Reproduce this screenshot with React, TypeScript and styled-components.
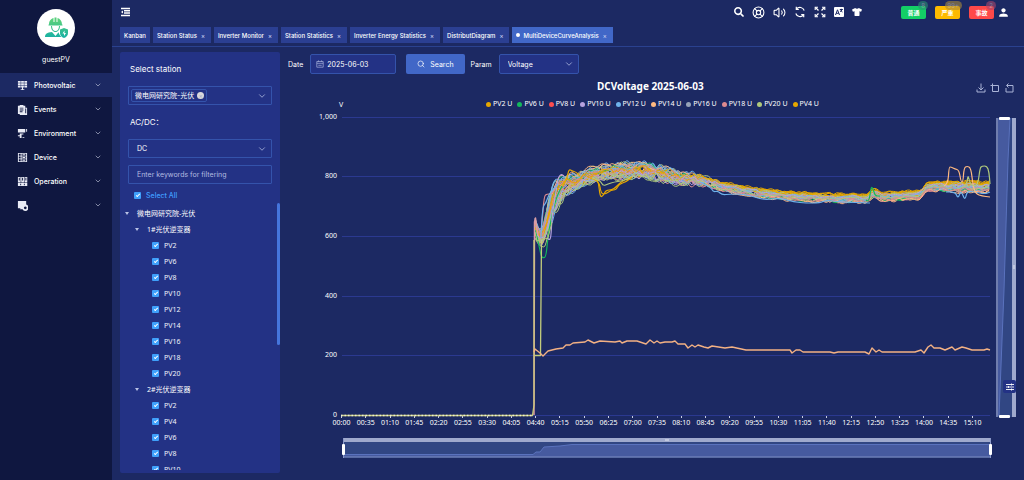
import React, { useState } from 'react';
import styled, { createGlobalStyle } from 'styled-components';
import { ChevronDown, LifeBuoy, Search, Volume2 } from 'lucide-react';
import { FaSearch, FaTshirt } from 'react-icons/fa';
import { MdPerson } from 'react-icons/md';

const UI = `Inter, "Noto Sans CJK SC", sans-serif`;
const TEXT = `"Noto Sans", "Noto Sans CJK SC", sans-serif`;

const GlobalStyle = createGlobalStyle`
  *, *::before, *::after { box-sizing: border-box; }
  body { margin: 0; background: #1c2963; color: #fff; font: 7px ${UI}; }
  button, input, select { font: inherit; color: inherit; margin: 0; }
  ul { list-style: none; margin: 0; padding: 0; }
  svg { display: block; flex: none; }
`;

const Page = styled.div`
  display: flex;
  height: 100vh;
  min-height: 480px;
  overflow: hidden;
`;

/* ---------- side navigation ---------- */

const Side = styled.nav`
  flex: none;
  width: 112px;
  background: #0f1740;
`;

const Profile = styled.div`
  display: flex;
  flex-direction: column;
  align-items: center;
  gap: 8px;
  height: 73px;
  padding-top: 9px;
  line-height: 10px;
`;

const Avatar = styled.div`
  display: grid;
  place-items: center;
  width: 38px;
  height: 38px;
  border-radius: 50%;
  background: #fff;
`;

const MenuItem = styled.button<{ $active?: boolean }>`
  display: flex;
  align-items: center;
  width: 100%;
  height: 24px;
  padding: 0 10px 0 17px;
  border: 0;
  background: ${(p) => (p.$active ? '#1c2963' : 'transparent')};
  font-weight: 500;
  text-align: left;
  cursor: pointer;
`;

const MenuLabel = styled.span`
  flex: 1;
  margin-left: 6px;
`;

/* ---------- top bar ---------- */

const Main = styled.div`
  display: flex;
  flex: 1;
  flex-direction: column;
  min-width: 0;
`;

const TopBar = styled.header`
  display: flex;
  align-items: center;
  height: 24px;
  padding: 0 14px 0 8px;
`;

const IconButton = styled.button`
  display: grid;
  place-items: center;
  padding: 0;
  border: 0;
  background: none;
  color: #fff;
  cursor: pointer;
`;

const TopIcons = styled.div`
  display: flex;
  align-items: center;
  gap: 8px;
  margin-left: auto;
`;

const Alarms = styled.div`
  display: flex;
  gap: 9px;
  margin: 0 3px 0 39px;
`;

const Alarm = styled.button<{ $color: string }>`
  position: relative;
  width: 25px;
  height: 13px;
  padding: 0;
  border: 0;
  border-radius: 2px;
  background: ${(p) => p.$color};
  font-size: 6px;
  font-weight: 700;
  line-height: 13px;
  cursor: pointer;
`;

const Count = styled.span<{ $color: string }>`
  position: absolute;
  top: -5px;
  right: -2px;
  min-width: 10px;
  height: 9px;
  padding: 0 3px;
  border-radius: 5px;
  background: ${(p) => p.$color};
  color: #b4b8c8;
  font-weight: 400;
  line-height: 9px;
  opacity: 0.6;
`;

const Tabs = styled.div`
  display: flex;
  gap: 3px;
  height: 23px;
  padding: 3px 8px 4px;
  border-bottom: 1px solid #2a418f;
`;

const Tab = styled.button<{ $active?: boolean }>`
  display: flex;
  align-items: center;
  gap: 4px;
  height: 16px;
  padding: 0 4px;
  border: 0;
  background: ${(p) => (p.$active ? '#4167c7' : '#2b3f92')};
  font-size: 6px;
  font-weight: 500;
  white-space: nowrap;
  cursor: pointer;
`;

const TabDot = styled.span`
  width: 4px;
  height: 4px;
  margin-right: -1px;
  border-radius: 50%;
  background: #fff;
`;

const TabClose = styled.span`
  width: 4px;
  margin-right: 2px;
  color: #c5cdf0;
  text-align: center;
`;

/* ---------- station panel ---------- */

const Content = styled.main`
  display: flex;
  flex: 1;
  gap: 8px;
  min-height: 0;
  padding: 5px 0 7px 8px;
`;

const Panel = styled.section`
  display: flex;
  flex: none;
  flex-direction: column;
  width: 160px;
  padding: 12px 0 3px;
  border-radius: 2px;
  background: #233285;
`;

const PanelTitle = styled.h2`
  margin: 0 10px;
  font-size: 8px;
  font-weight: 400;
  line-height: 10px;
`;

const FieldTitle = styled.label`
  margin: 12px 10px 0;
  font-size: 8px;
  line-height: 10px;
`;

const Field = styled.div<{ $top: number }>`
  position: relative;
  display: flex;
  align-items: center;
  height: 19px;
  margin: ${(p) => p.$top}px 8px 0;
  border: 1px solid #3453ab;
  border-radius: 1px;
  color: #aab4dc;
`;

const FieldSelect = styled.select`
  flex: 1;
  width: 100%;
  height: 100%;
  padding: 0 8px;
  border: 0;
  outline: 0;
  appearance: none;
  background: transparent;
  color: #fff;
`;

const FieldInput = styled.input`
  flex: 1;
  width: 100%;
  height: 100%;
  padding: 0 8px;
  border: 0;
  outline: 0;
  background: transparent;
  color: #fff;
  &::placeholder { color: #b3bce0; opacity: 1; }
`;

const Chevron = styled(ChevronDown)`
  position: absolute;
  right: 4px;
  pointer-events: none;
`;

const Tag = styled.span`
  display: flex;
  align-items: center;
  gap: 3px;
  height: 13px;
  margin-left: 2px;
  padding: 0 2px 0 3px;
  border: 1px solid #3453ab;
  border-radius: 2px;
  color: #fff;
  line-height: 11px;
  white-space: nowrap;
`;

const TagClose = styled.button`
  width: 7px;
  height: 7px;
  padding: 0;
  border: 0;
  border-radius: 50%;
  background: #d8d8dc;
  color: #a3a8bd;
  font-size: 6px;
  line-height: 7px;
`;

const CheckRow = styled.label<{ $indent: number }>`
  display: flex;
  align-items: center;
  gap: 5px;
  height: 16px;
  padding-left: ${(p) => p.$indent}px;
  color: #f0f2fb;
  cursor: pointer;
`;

const SelectAll = styled(CheckRow)`
  margin-top: 3px;
  color: #409eff;
  font-weight: 500;
`;

const Check = styled.input`
  display: grid;
  place-items: center;
  width: 7px;
  height: 7px;
  appearance: none;
  border-radius: 1px;
  background: #3fa0fb;
  &:checked::after {
    content: '';
    width: 2px;
    height: 4px;
    margin-top: -1px;
    border: solid #fff;
    border-width: 0 1px 1px 0;
    transform: rotate(45deg);
  }
`;

const TreeArea = styled.div`
  position: relative;
  flex: 1;
  min-height: 0;
`;

const Tree = styled.div`
  height: 100%;
  padding-top: 2px;
  overflow: hidden;
  font-family: ${TEXT};
`;

const Node = styled.button<{ $indent: number }>`
  display: flex;
  align-items: center;
  gap: 8px;
  width: 100%;
  height: 16px;
  padding: 0 0 0 ${(p) => p.$indent}px;
  border: 0;
  background: none;
  font-size: 7px;
  &::before {
    content: '';
    border: solid transparent;
    border-width: 3px 2px 0;
    border-top-color: #b9c2e6;
  }
`;

const Thumb = styled.div`
  position: absolute;
  top: 0;
  right: 0;
  width: 3px;
  height: 53%;
  border-radius: 2px;
  background: #4575dd;
`;

/* ---------- chart side ---------- */

const Work = styled.section`
  display: flex;
  flex: 1;
  flex-direction: column;
  min-width: 0;
`;

const Query = styled.form`
  display: flex;
  align-items: center;
  height: 20px;
  margin-top: 2px;
`;

const QueryBox = styled.div<{ $width: number }>`
  position: relative;
  display: flex;
  align-items: center;
  width: ${(p) => p.$width}px;
  height: 20px;
  margin: 0 10px 0 7px;
  border: 1px solid #3453ab;
  border-radius: 2px;
  background: #233285;
  color: #aab4dc;
`;

const DateInput = styled(FieldInput)`
  padding: 0 3px;
`;

const SearchButton = styled.button`
  display: flex;
  align-items: center;
  gap: 5px;
  height: 20px;
  margin-right: 6px;
  padding: 0 11px;
  border: 0;
  border-radius: 2px;
  background: #4167c7;
  cursor: pointer;
`;

const ChartHead = styled.div`
  display: flex;
  align-items: center;
  height: 20px;
  margin-top: 2px;
  padding: 0 10px 0 309px;
  font-family: ${TEXT};
`;

const ChartTitle = styled.h1`
  flex: 1;
  margin: 0;
  font-size: 10px;
  font-weight: 700;
  line-height: 14px;
`;

const Tools = styled.div`
  display: flex;
  gap: 4px;
  padding-top: 4px;
`;

const Legend = styled.ul`
  display: flex;
  gap: 5px;
  height: 12px;
  margin-top: 2px;
  padding-left: 198px;
  font-family: ${TEXT};
`;

const LegendItem = styled.li<{ $color: string }>`
  display: flex;
  align-items: center;
  gap: 2px;
  white-space: nowrap;
  line-height: 12px;
  &::before {
    content: '';
    width: 5px;
    height: 5px;
    border-radius: 50%;
    background: ${(p) => p.$color};
  }
`;

const ChartBox = styled.div`
  position: relative;
`;

const ChartSvg = styled.svg`
  width: 100%;
  height: auto;
  margin-top: -12px;
  font-family: ${TEXT};
  font-size: 7px;
  pointer-events: none;
`;

const Floating = styled.button`
  position: absolute;
  right: 8px;
  bottom: 71px;
  display: grid;
  place-items: center;
  width: 13px;
  height: 13px;
  padding: 0;
  border: 0;
  border-radius: 2px;
  background: #233285;
  color: #fff;
`;

/* ---------- data ---------- */

type Pt = [number, number];

const GOLD = '#e6a700';
const LEGEND: [string, string][] = [
  ['PV2 U', GOLD],
  ['PV6 U', '#13b85c'],
  ['PV8 U', '#ff4d4f'],
  ['PV10 U', '#b6a2de'],
  ['PV12 U', '#6fb3ec'],
  ['PV14 U', '#ffb980'],
  ['PV16 U', '#97a3b8'],
  ['PV18 U', '#dc8a8f'],
  ['PV20 U', '#b0c97c'],
  ['PV4 U', GOLD],
];

/* centre line and half spread of the bundle: x, y, spread */
const BAND: [number, number, number][] = [
  [535, 228, 9], [537, 232, 9], [541, 241, 8], [545, 228, 16], [549, 212, 19], [554, 199, 18],
  [560, 190, 14], [566, 185, 12], [575, 182, 10], [586, 177, 8], [600, 173, 8],
  [620, 171, 9], [642, 170, 9], [660, 173, 9], [680, 178, 9], [692, 178, 9],
  [705, 181, 7], [720, 186, 6], [735, 189, 6], [752, 192, 5], [790, 196, 5],
  [830, 198, 5], [868, 199, 5], [873, 192, 5], [881, 197, 5], [920, 195, 5],
  [927, 187, 5], [945, 186, 6], [965, 187, 6], [990, 187, 6],
];

const bandAt = (x: number): Pt => {
  let i = 0;
  while (i < BAND.length - 2 && BAND[i + 1][0] < x) i += 1;
  const a = BAND[i];
  const b = BAND[i + 1];
  const t = Math.min(1, Math.max(0, (x - a[0]) / (b[0] - a[0])));
  return [a[1] + (b[1] - a[1]) * t, a[2] + (b[2] - a[2]) * t];
};

const random = (seed: number) => {
  let s = seed;
  return () => {
    s = (s * 1664525 + 1013904223) % 4294967296;
    return s / 4294967296;
  };
};

const smooth = (pts: Pt[]) => {
  let d = `M${pts[0][0]} ${pts[0][1]}`;
  for (let i = 1; i < pts.length - 1; i += 1) {
    const mx = (pts[i][0] + pts[i + 1][0]) / 2;
    const my = (pts[i][1] + pts[i + 1][1]) / 2;
    d += `Q${pts[i][0].toFixed(1)} ${pts[i][1].toFixed(1)} ${mx.toFixed(1)} ${my.toFixed(1)}`;
  }
  const last = pts[pts.length - 1];
  return `${d}L${last[0]} ${last[1]}`;
};

const straight = (pts: Pt[]) => `M${pts.map((p) => p.join(' ')).join('L')}`;

const bundleLine = (index: number, color: string) => {
  const rnd = random(index * 7919 + 17);
  rnd();
  const late = color === GOLD ? -0.3 - rnd() * 0.5 : rnd() * 1.2 - 0.4;
  const early = rnd() * 1.5 - 0.75;
  const pts: Pt[] = [];
  for (let x = 535; x <= 990; x += 3.467) {
    const [y, spread] = bandAt(x);
    const mix = Math.min(1, Math.max(0, (x - 660) / 80));
    const place = early * (1 - mix) + late * mix;
    const noise = (rnd() - 0.5) * (x < 720 ? 1.1 : 0.9);
    pts.push([x, y + spread * (place + noise)]);
  }
  return smooth(pts);
};

const SHADES = ['#13b85c', GOLD, '#b6a2de', '#6fb3ec', '#ffb980', '#97a3b8', GOLD, '#dc8a8f', '#b0c97c', '#6fb3ec', '#dc8a8f', GOLD, '#b6a2de', '#b0c97c'];
const BUNDLE = Array.from({ length: 42 }, (_, i) => {
  const color = SHADES[i % SHADES.length];
  return { color, d: bundleLine(i, color) };
});

const OUTLIERS: { color: string; pts: Pt[] }[] = [
  { color: '#13b85c', pts: [[535, 230], [538, 240], [541, 256], [543, 258], [546, 257], [548, 236], [551, 220], [556, 198], [562, 186]] },
  { color: '#b6a2de', pts: [[547, 238], [549, 240], [551, 238], [552, 215], [556, 192], [558, 178], [561, 174], [564, 176]] },
  { color: '#dc8a8f', pts: [[540, 238], [542, 226], [544, 196], [547, 194], [551, 194], [555, 190], [560, 180]] },
  { color: '#6fb3ec', pts: [[541, 238], [542, 208], [546, 203], [549, 194], [553, 190], [558, 184]] },
  { color: GOLD, pts: [[563, 186], [567, 178], [569, 169], [572, 171], [576, 172], [580, 176]] },
  { color: GOLD, pts: [[594, 178], [598, 178], [600, 197], [603, 196], [606, 190], [612, 190], [616, 187], [621, 182], [628, 178]] },
  { color: GOLD, pts: [[590, 178], [599, 180], [601, 194], [606, 194], [611, 190], [616, 190], [619, 184], [626, 182], [632, 177]] },
  { color: '#b0c97c', pts: [[592, 178], [600, 180], [603, 186], [608, 184], [614, 182], [622, 181], [630, 178]] },
  { color: '#6fb3ec', pts: [[700, 182], [711, 187], [713, 192], [718, 191], [722, 195], [730, 194], [740, 194], [752, 196], [764, 200], [780, 198], [794, 202], [806, 203], [820, 203], [826, 200], [840, 202], [870, 203]] },
  { color: '#13b85c', pts: [[866, 200], [869, 203], [871, 187], [873, 188], [875, 196], [880, 196]] },
  { color: '#6fb3ec', pts: [[946, 192], [955, 191], [958, 199], [961, 190], [965, 201], [967, 191], [975, 192], [985, 194], [990, 192]] },
  { color: '#ffb980', pts: [[944, 186], [948, 184], [949, 167], [951, 167], [955, 169], [959, 170], [961, 182], [963, 182], [964, 168], [967, 166], [971, 168], [973, 186], [976, 194], [982, 196], [990, 197]] },
  { color: '#b0c97c', pts: [[964, 186], [967, 184], [968, 174], [970, 184], [974, 186], [978, 184], [980, 168], [982, 166], [987, 166], [989, 172], [990, 184]] },
];

const LOW: Pt[] = [
  [534, 352], [535, 349], [540, 353], [543, 356], [548, 351], [556, 349], [563, 348], [566, 345], [570, 345], [573, 343],
  [585, 342], [588, 340], [594, 343], [600, 341], [615, 342], [620, 341], [622, 343], [627, 341], [637, 341], [640, 342],
  [646, 344], [650, 340], [654, 343], [657, 341], [660, 343], [665, 342], [672, 342], [675, 341], [678, 344], [685, 344],
  [688, 348], [692, 345], [695, 347], [698, 345], [704, 347], [708, 348], [712, 346], [725, 348], [732, 347], [746, 350],
  [790, 350], [792, 353], [796, 350], [800, 350], [803, 352], [815, 352], [830, 352], [834, 353], [838, 352], [865, 352],
  [869, 354], [872, 348], [876, 352], [879, 350], [882, 352], [915, 352], [921, 350], [924, 353], [928, 347], [931, 345],
  [934, 348], [940, 348], [945, 350], [952, 347], [955, 350], [962, 347], [966, 348], [972, 350], [984, 350], [987, 349], [990, 350],
];

const TIMES = Array.from({ length: 27 }, (_, i) => {
  const m = i * 35;
  return `${String(Math.floor(m / 60)).padStart(2, '0')}:${String(m % 60).padStart(2, '0')}`;
});

const LEVELS: [string, number][] = [['1,000', 117], ['800', 176], ['600', 236], ['400', 296], ['200', 355], ['0', 415]];

const TABS = ['Kanban', 'Station Status', 'Inverter Monitor', 'Station Statistics', 'Inverter Energy Statistics', 'DistributDiagram', 'MultiDeviceCurveAnalysis'];

const GROUPS = [
  { name: '1#光伏逆变器', items: ['PV2', 'PV6', 'PV8', 'PV10', 'PV12', 'PV14', 'PV16', 'PV18', 'PV20'] },
  { name: '2#光伏逆变器', items: ['PV2', 'PV4', 'PV6', 'PV8', 'PV10'] },
];

/* ---------- icons ---------- */

const AvatarIcon = () => (
  <svg width="24" height="24" viewBox="0 0 24 24">
    <defs>
      <linearGradient id="crew" x1="0" y1="0" x2="0" y2="24" gradientUnits="userSpaceOnUse">
        <stop offset="0.200" stopColor="#56cf7c" />
        <stop offset="0.900" stopColor="#17b0a4" />
      </linearGradient>
    </defs>
    <g fill="url(#crew)">
      <path d="M5 8.500C5 4.500 7.500 2.500 9.500 2V6h1V1.500h2V6h1V2c2.500.5 4.500 3 4.500 6.500h.5v1h-14v-1Z" />
      <path d="M7 10h1c0 3 1.500 5 3.500 5s3.500-2 3.500-5h1c0 3.500-2 6-4.500 6S7 13.500 7 10Z" />
      <path d="M1 21c0-3 2-4.500 7-5l3.500 4 3-3.700c.8 2 1.500 3.500 3 4.700Z" />
      <path d="M20 12l4 1.500v3.500c0 2.500-1.500 4-4 5-2.500-1-4-2.500-4-5v-3.500Z" />
    </g>
    <path d="M20.500 14.500l-2 3h1.500v2.500l2-3h-1.500Z" fill="#fff" />
  </svg>
);

const MENU_SHAPES: Record<string, React.ReactNode> = {
  Photovoltaic: (
    <path d="M1 1h3v2H1ZM4.500 1h3v2h-3ZM8 1h3v2H8ZM1 3.600h3v2H1ZM4.500 3.600h3v2h-3ZM8 3.600h3v2H8ZM1 6.200h3v2H1ZM4.500 6.200h3v2h-3ZM8 6.200h3v2H8ZM5.400 8h1.200v2H8v1H4v-1h1.400Z" />
  ),
  Events: (
    <path fillRule="evenodd" d="M1 2h2V1h4v1h2v2h2v8H3v-1H1ZM3 4h4v1H3Zm0 2h4v1H3Zm0 2h3v1H3Zm6-3v5h1V5Z" />
  ),
  Environment: <path d="M1 1h8v4H1ZM10 1h1v3h-1ZM3 6h4v1H5v4H3v-2H1V8h2ZM6 10h2v1H6Z" />,
  Device: (
    <path fillRule="evenodd" d="M1 1h10v10H1ZM2 2v2h2V2Zm3 0v2h5V2ZM2 5v2h2V5Zm3 0v2h5V5ZM2 8v2h2V8Zm3 0v2h5V8ZM6 2.500h3v1H6Zm0 3h3v1H6Zm0 3h3v1H6Z" />
  ),
  Operation: (
    <path fillRule="evenodd" d="M1 1h3v6H1Zm3.600 0h3v6h-3Zm3.600 0h3v6h-3ZM1 7.600h10.200v3.400H1ZM2 2v3h1V2Zm3.600 0v3h1V2Zm3.600 0v3h1V2ZM3.500 8.500v1.500h1V8.500Zm4 0v1.500h1V8.500Z" />
  ),
  '': (
    <path fillRule="evenodd" d="M1 1h9v4a3.500 3.500 0 1 1-4 5H3l1-1H1ZM9 7a1.500 1.500 0 1 0 .1 0Z" />
  ),
};

const MenuIcon = ({ name }: { name: string }) => (
  <svg width="11" height="11" viewBox="0 0 12 12" fill="#e9ebf5">{MENU_SHAPES[name]}</svg>
);

const MENU = ['Photovoltaic', 'Events', 'Environment', 'Device', 'Operation', ''];

const MenuFold = () => (
  <svg width="11" height="10" viewBox="0 0 11 10" stroke="#fff" fill="none">
    <path d="M1 1.500h9M4 3.800h6M4 6.100h6M1 8.400h9" strokeWidth="1.500" />
    <path d="M1 5L3 3.500v3Z" fill="#fff" stroke="none" />
  </svg>
);

const Reload = () => (
  <svg width="12" height="12" viewBox="0 0 12 12" stroke="#fff" fill="none" strokeWidth="1.200">
    <path d="M10.200 4.500A4.500 4.500 0 0 0 2.500 3M1.800 7.500A4.500 4.500 0 0 0 9.500 9" />
    <path d="M2.300 .8v2.700h2.500M9.700 11.200V8.500H7.200" />
  </svg>
);

const Expand = () => (
  <svg width="12" height="12" viewBox="0 0 12 12" stroke="#fff" fill="none" strokeWidth="1.300">
    <path d="M1.500 1.500l3 3M10.500 1.500l-3 3M1.500 10.500l3-3M10.500 10.500l-3-3" />
    <path d="M1.200 4V1.200H4M8 1.200h2.800V4M1.200 8v2.800H4M8 10.800h2.800V8" strokeWidth="1.100" />
  </svg>
);

const Translate = () => (
  <svg width="10" height="10" viewBox="0 0 10 10">
    <rect width="10" height="10" rx="1" fill="#fff" />
    <path d="M1.500 8L3.500 2.800 5.500 8M2.200 6.300h2.600M5.800 2.500h3M7.300 1.800v.7M6.300 5l2-2.500M6.500 3.300l2 1.700" stroke="#1c2963" fill="none" />
  </svg>
);

const ToolIcon = ({ d }: { d: string }) => (
  <svg width="10" height="10" viewBox="0 0 10 10" stroke="#a9b3d6" fill="none"><path d={d} /></svg>
);

const CalendarMark = styled.svg`
  margin-left: 5px;
`;

const Calendar = () => (
  <CalendarMark width="8" height="8" viewBox="0 0 8 8" stroke="#9aa5d2" fill="none" strokeWidth=".8">
    <path d="M.8 1.500h6.400v5.700H.8ZM.8 3.300h6.400M2.500.4v1.600M5.500.4v1.600M2.300 5.300h3.400" />
  </CalendarMark>
);

/* ---------- chart ---------- */

const Chart = () => (
  <ChartSvg viewBox="288 98 736 366" role="img" aria-label="DC voltage over time">
    <text x="341" y="107" fill="#fff" textAnchor="middle">V</text>
    {LEVELS.map(([label, y]) => (
      <g key={label}>
        <path d={`M342 ${y + 0.5}H990`} stroke="#2b3990" />
        <text x="337" y={y + 2} fill="#fff" textAnchor="end">{label}</text>
      </g>
    ))}
    {TIMES.map((t, i) => (
      <g key={t}>
        <path d={`M${Math.round(341 + i * 24.27) + 0.5} 416v2`} stroke="#c8cde2" />
        <text x={341.5 + i * 24.27} y="425" fill="#fff" textAnchor="middle">{t}</text>
      </g>
    ))}
    <g fill="none" strokeLinejoin="round">
      {BUNDLE.map((s, i) => (
        <path key={i} d={s.d} stroke={s.color} />
      ))}
      {OUTLIERS.map((s, i) => (
        <path key={i} d={smooth(s.pts)} stroke={s.color} strokeWidth="1.200" />
      ))}
      <path d="M535 232L537 241 541 240 548 238 552 222" stroke="#b0c97c" />
      <path d="M534 355.500H540.500L541.500 240" stroke="#c3cd7c" strokeWidth="1.300" />
      <path d="M534 415L534.500 222L535.500 218L538 236" stroke="#dc9aa6" strokeWidth="1.500" />
      <path d="M341 415.500H532.500L534 405V240" stroke="#c9cc7a" strokeWidth="1.300" />
      <path d="M341 415.500H532" stroke="#eceed8" strokeDasharray="1.500 2" strokeWidth="1.500" />
      <path d={straight(LOW)} stroke="#f3b184" strokeWidth="1.400" />
    </g>

    <g>
      <rect x="343" y="438" width="648" height="20" fill="#314683" />
      <path d="M343 454.500H533L536 452H540L544 447 560 446 572 444.500H990V457H343Z" fill="#465a9f" />
      <path d="M343 454.500H533L536 452H540L544 447 560 446 572 444.500H990" fill="none" stroke="#5a72bd" />
      <rect x="343" y="438" width="648" height="4" fill="#9fa9cd" />
      <path d="M665 440h4" stroke="#e2e6f3" />
      <path d="M343 457H991" stroke="#7f8dc2" />
      <path d="M343.500 438v20M990.500 438v20" stroke="#8b98c8" />
      <rect x="342" y="444" width="3" height="11" rx="1" fill="#fff" />
      <rect x="989" y="444" width="3" height="11" rx="1" fill="#fff" />
    </g>

    <g>
      <rect x="997" y="118" width="19" height="299" fill="#314683" />
      <path d="M998 118H1010L1008 160 1004 290 999 416H998Z" fill="#465a9f" />
      <path d="M1010 118L1008 160 1004 290 999 416" fill="none" stroke="#5a72bd" />
      <rect x="996" y="118" width="2" height="299" fill="#6f7dae" />
      <rect x="1012" y="118" width="4" height="299" fill="#9fa9cd" />
      <path d="M1014 265v4" stroke="#e2e6f3" />
      <rect x="999" y="117" width="11" height="3" rx="1" fill="#fff" />
      <rect x="999" y="415" width="11" height="3" rx="1" fill="#fff" />
    </g>
  </ChartSvg>
);

export default function App() {
  const [date, setDate] = useState('2025-06-03');
  return (
    <Page>
      <GlobalStyle />
      <Side>
        <Profile>
          <Avatar><AvatarIcon /></Avatar>
          guestPV
        </Profile>
        {MENU.map((name, i) => (
          <MenuItem key={name} $active={i === 0} aria-label={name || 'More'}>
            <MenuIcon name={name} />
            <MenuLabel>{name}</MenuLabel>
            <ChevronDown size={8} color="#b9bfd4" />
          </MenuItem>
        ))}
      </Side>

      <Main>
        <TopBar>
          <IconButton aria-label="Fold menu"><MenuFold /></IconButton>
          <TopIcons>
            <IconButton aria-label="Search"><FaSearch size={10} /></IconButton>
            <IconButton aria-label="Help"><LifeBuoy size={13} strokeWidth={2} /></IconButton>
            <IconButton aria-label="Sound"><Volume2 size={13} strokeWidth={2} /></IconButton>
            <IconButton aria-label="Reload"><Reload /></IconButton>
            <IconButton aria-label="Full screen"><Expand /></IconButton>
            <IconButton aria-label="Language"><Translate /></IconButton>
            <IconButton aria-label="Theme"><FaTshirt size={10} /></IconButton>
          </TopIcons>
          <Alarms>
            <Alarm $color="#13ce66">普通<Count $color="#2c8f72">8</Count></Alarm>
            <Alarm $color="#ffba00">严重<Count $color="#a98a3c">99+</Count></Alarm>
            <Alarm $color="#ff4949">事故<Count $color="#a8476c">2</Count></Alarm>
          </Alarms>
          <IconButton aria-label="Account"><MdPerson size={13} /></IconButton>
        </TopBar>

        <Tabs>
          {TABS.map((name, i) => (
            <Tab key={name} $active={i === 6}>
              {i === 6 && <TabDot />}
              {name}
              {i > 0 && <TabClose>×</TabClose>}
            </Tab>
          ))}
        </Tabs>

        <Content>
          <Panel>
            <PanelTitle>Select station</PanelTitle>
            <Field $top={12}>
              <Tag>微电网研究院-光伏<TagClose aria-label="Remove">×</TagClose></Tag>
              <Chevron size={10} />
            </Field>
            <FieldTitle htmlFor="current">AC/DC：</FieldTitle>
            <Field $top={12}>
              <FieldSelect id="current" defaultValue="DC"><option>DC</option><option>AC</option></FieldSelect>
              <Chevron size={10} />
            </Field>
            <Field $top={7}>
              <FieldInput aria-label="Filter" placeholder="Enter keywords for filtering" />
            </Field>
            <SelectAll $indent={14}>
              <Check type="checkbox" defaultChecked />
              Select All
            </SelectAll>
            <TreeArea>
              <Tree>
                <Node $indent={5}>微电网研究院-光伏</Node>
                {GROUPS.map((g) => (
                  <div key={g.name}>
                    <Node $indent={15}>{g.name}</Node>
                    {g.items.map((item) => (
                      <CheckRow key={item} $indent={32}>
                        <Check type="checkbox" defaultChecked />
                        {item}
                      </CheckRow>
                    ))}
                  </div>
                ))}
              </Tree>
              <Thumb />
            </TreeArea>
          </Panel>

          <Work>
            <Query onSubmit={(e) => e.preventDefault()}>
              <label htmlFor="date">Date</label>
              <QueryBox $width={86}>
                <Calendar />
                <DateInput id="date" value={date} onChange={(e) => setDate(e.target.value)} />
              </QueryBox>
              <SearchButton type="submit"><Search size={8} />Search</SearchButton>
              <label htmlFor="param">Param</label>
              <QueryBox $width={80}>
                <FieldSelect id="param" defaultValue="Voltage"><option>Voltage</option><option>Current</option></FieldSelect>
                <Chevron size={10} />
              </QueryBox>
            </Query>
            <ChartHead>
              <ChartTitle>DCVoltage 2025-06-03</ChartTitle>
              <Tools>
                <IconButton aria-label="Save image"><ToolIcon d="M5 .5v6.500M2.500 4.500L5 7 7.500 4.500M1 6.500v2.500h8V6.500" /></IconButton>
                <IconButton aria-label="Zoom"><ToolIcon d="M.5 2.500h8v6h-6v-8" /></IconButton>
                <IconButton aria-label="Reset zoom"><ToolIcon d="M2 5v4h7V2.500H3M4.500 .5l-2 2 2 2" /></IconButton>
              </Tools>
            </ChartHead>
            <Legend>
              {LEGEND.map(([name, color]) => <LegendItem key={name} $color={color}>{name}</LegendItem>)}
            </Legend>
            <ChartBox>
              <Chart />
              <Floating aria-label="Settings">
                <svg width="8" height="8" viewBox="0 0 8 8" stroke="#fff"><path d="M0 1.500h8M0 4h8M0 6.500h8M5.500.5v2M2.500 3v2M5.500 5.500v2" strokeWidth=".9" /></svg>
              </Floating>
            </ChartBox>
          </Work>
        </Content>
      </Main>
    </Page>
  );
}
